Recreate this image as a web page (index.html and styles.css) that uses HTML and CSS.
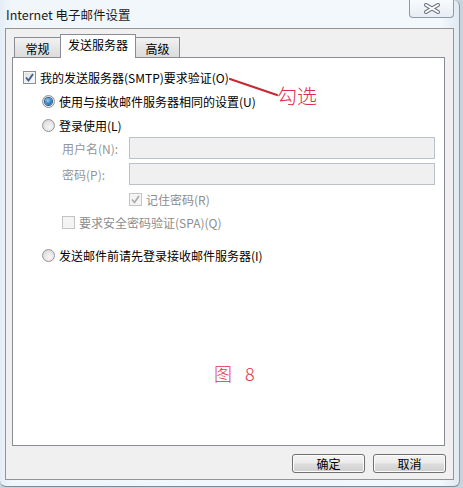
FILE: index.html
```html
<!DOCTYPE html>
<html lang="zh-CN">
<head>
<meta charset="utf-8">
<title>Internet 电子邮件设置</title>
<link rel="stylesheet" href="styles.css">
</head>
<body>
<div class="window">
  <div class="titlebar">
    <span class="title">Internet 电子邮件设置</span>
    <div class="close">
      <svg width="18" height="11" viewBox="0 0 18 11">
        <path d="M3 2 L15 9 M15 2 L3 9" stroke="#6f7883" stroke-width="4" stroke-linecap="round" fill="none"/>
        <path d="M3 2 L15 9 M15 2 L3 9" stroke="#ffffff" stroke-width="2" stroke-linecap="round" fill="none"/>
      </svg>
    </div>
  </div>
  <div class="client">
    <div class="tabs">
      <div class="tab first">常规</div>
      <div class="tab active">发送服务器</div>
      <div class="tab last">高级</div>
    </div>
    <div class="page">
      <div class="row r1">
        <span class="check on"><svg width="9" height="9" viewBox="0 0 9 9"><path d="M1 4.5 L3.5 7.5 L8 1" stroke="#3e5a8e" stroke-width="1.8" fill="none"/></svg></span>
        <span class="lbl">我的发送服务器(SMTP)要求验证(O)</span>
      </div>
      <div class="row r2">
        <span class="radio sel"><span class="dot"></span></span>
        <span class="lbl">使用与接收邮件服务器相同的设置(U)</span>
      </div>
      <div class="row r3">
        <span class="radio"></span>
        <span class="lbl">登录使用(L)</span>
      </div>
      <div class="row field f1">
        <span class="flabel">用户名(N):</span>
        <span class="input"></span>
      </div>
      <div class="row field f2">
        <span class="flabel">密码(P):</span>
        <span class="input"></span>
      </div>
      <div class="row r6">
        <span class="check dis"><svg width="9" height="9" viewBox="0 0 9 9"><path d="M1 4.5 L3.5 7.5 L8 1" stroke="#a8a8a8" stroke-width="1.6" fill="none"/></svg></span>
        <span class="lbl gray">记住密码(R)</span>
      </div>
      <div class="row r7">
        <span class="check dis"></span>
        <span class="lbl gray">要求安全密码验证(SPA)(Q)</span>
      </div>
      <div class="row r8">
        <span class="radio"></span>
        <span class="lbl">发送邮件前请先登录接收邮件服务器(I)</span>
      </div>

      <svg class="arrow" width="52" height="22" viewBox="0 0 52 22">
        <path d="M2 3 L49 19" stroke="#c42a33" stroke-width="2.2" stroke-linecap="round" fill="none"/>
      </svg>
      <span class="note-check">勾选</span>
      <span class="note-fig">图 8</span>
    </div>
    <div class="buttons">
      <button class="btn">确定</button>
      <button class="btn">取消</button>
    </div>
  </div>
</div>
</body>
</html>
```

FILE: styles.css
```css
html, body {
  margin: 0;
  padding: 0;
}
body {
  width: 463px;
  height: 488px;
  background: #c9d3dd;
  font-family: "Noto Sans CJK SC", "Noto Sans", sans-serif;
  font-size: 12px;
  color: #000;
  overflow: hidden;
}
.window {
  width: 460px;
  height: 487px;
  box-sizing: border-box;
  background: linear-gradient(90deg, #e4edf6 0px, #f1f6fb 12px, #f3f8fc 440px, #dfe8f1 460px);
  border-right: 1px solid #8a98a8;
  border-bottom: 1px solid #7d8a97;
  border-radius: 0 6px 6px 6px;
}
.titlebar {
  height: 28px;
  display: flex;
  justify-content: space-between;
  align-items: flex-start;
}
.title {
  padding: 6px 0 0 6px;
  line-height: 17px;
  font-size: 12.5px;
  color: #1b1b1b;
}
.close {
  width: 45px;
  height: 18px;
  box-sizing: border-box;
  margin-right: 5px;
  border: 1px solid #8e9aa8;
  border-top: none;
  border-radius: 0 0 4px 4px;
  background: linear-gradient(#f8fbfd, #e6edf4);
  display: flex;
  align-items: center;
  justify-content: center;
}
.client {
  margin-left: 5px;
  width: 449px;
  height: 452px;
  box-sizing: border-box;
  border: 1px solid #949494;
  background: #f0f0f0;
  padding: 5px 0 0 6px;
}
.tabs {
  display: flex;
  align-items: flex-end;
  height: 23px;
  padding-left: 2px;
}
.tab {
  height: 20px;
  box-sizing: border-box;
  border: 1px solid #898c95;
  border-bottom: none;
  background: linear-gradient(#f3f3f3, #e6e6e6 50%, #dcdcdc);
  text-align: center;
  line-height: 19px;
  padding-top: 1px;
}
.tab.first {
  width: 46px;
  border-right: none;
}
.tab.last {
  width: 44px;
  border-left: none;
}
.tab.active {
  width: 76px;
  height: 24px;
  margin-bottom: -1px;
  background: #fff;
  line-height: 19px;
  padding-top: 0;
  position: relative;
  z-index: 1;
}
.page {
  position: relative;
  width: 433px;
  height: 389px;
  box-sizing: border-box;
  border: 1px solid #898c95;
  background: #fff;
  padding: 7px 0 0 10px;
}
.row {
  display: flex;
  align-items: center;
  height: 24px;
}
.lbl {
  margin-left: 4px;
  white-space: nowrap;
}
.lbl.gray {
  color: #8c8c8c;
}
.r2, .r3, .r8 {
  padding-left: 19px;
}
.field {
  height: 22px;
  padding-left: 39px;
}
.f1 {
  margin-top: 0;
}
.f2 {
  margin-top: 4px;
}
.flabel {
  width: 67px;
  color: #959595;
}
.input {
  width: 306px;
  height: 22px;
  box-sizing: border-box;
  border: 1px solid #b9c2cb;
  background: #f0f0f0;
}
.r6 {
  height: 23px;
  margin-top: 3px;
  padding-left: 106px;
}
.r7 {
  height: 22px;
  padding-left: 39px;
}
.r8 {
  height: 22px;
  margin-top: 11px;
}
.check {
  width: 13px;
  height: 13px;
  box-sizing: border-box;
  border: 1px solid #8e8f8f;
  background: linear-gradient(135deg, #dcdcdc, #fbfbfb);
  box-shadow: inset 0 0 0 1px #f4f4f4;
  display: flex;
  align-items: center;
  justify-content: center;
  flex: none;
}
.check.dis {
  border-color: #c4c4c4;
  background: #f4f4f4;
  box-shadow: none;
}
.radio {
  width: 13px;
  height: 13px;
  box-sizing: border-box;
  border-radius: 50%;
  border: 1px solid #8f9398;
  background: radial-gradient(circle at 60% 65%, #f6f6f6 0, #e4e4e4 55%, #cfcfcf 100%);
  display: flex;
  align-items: center;
  justify-content: center;
  flex: none;
}
.dot {
  width: 7px;
  height: 7px;
  border-radius: 50%;
  background: radial-gradient(circle at 40% 35%, #8fd3f7 0, #2f7fc4 55%, #1a4f8e 100%);
  box-shadow: 0 0 0 1px #2b5a8c;
}
.arrow {
  position: absolute;
  left: 215px;
  top: 18px;
}
.note-check {
  position: absolute;
  left: 264px;
  top: 27px;
  font-size: 20px;
  line-height: 21px;
  font-weight: 300;
  color: #d8304a;
}
.note-fig {
  position: absolute;
  left: 201px;
  top: 305px;
  font-size: 18px;
  line-height: 20px;
  font-weight: 300;
  word-spacing: 9px;
  color: #d93446;
}
.buttons {
  display: flex;
  justify-content: flex-end;
  gap: 8px;
  padding-right: 7px;
  margin-top: 8px;
}
.btn {
  width: 73px;
  height: 19px;
  box-sizing: border-box;
  border: 1px solid #707070;
  border-radius: 3px;
  background: linear-gradient(#f4f4f4 0, #ebebeb 48%, #dddddd 52%, #cfcfcf 100%);
  box-shadow: inset 0 0 0 1px #fcfcfc;
  font-family: "Noto Sans CJK SC", "Noto Sans", sans-serif;
  font-size: 12px;
  line-height: 15px;
  padding: 0;
  color: #000;
}
```
